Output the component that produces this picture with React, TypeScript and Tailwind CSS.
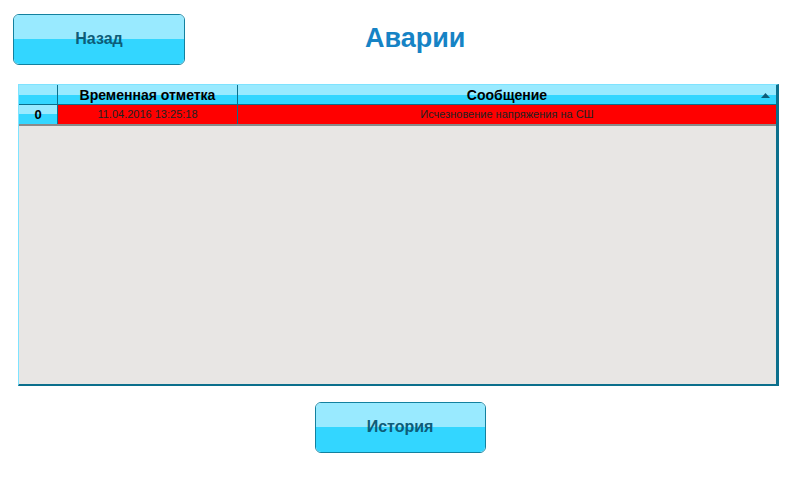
import React from "react";

function Btn({ label, className }: { label: string; className?: string }) {
  return (
    <div
      className={
        "relative flex flex-col overflow-hidden rounded-[6px] border border-[#13819f] " +
        (className ?? "")
      }
    >
      <div className="h-[24px] bg-[#99eaff]" />
      <div className="flex-1 bg-[#33d6ff]" />
      <div className="absolute inset-0 flex items-center justify-center pb-[1px] text-[16px] font-bold text-[#0d5c78]">
        {label}
      </div>
    </div>
  );
}

function HeadCell({ children, className }: { children?: React.ReactNode; className?: string }) {
  return (
    <div className={"relative flex flex-col " + (className ?? "")}>
      <div className="h-[10px] bg-[#99eaff]" />
      <div className="flex-1 bg-[#33d6ff]" />
      <div className="absolute inset-0 flex items-center justify-center text-[14px] font-bold leading-none text-black">
        {children}
      </div>
    </div>
  );
}

export default function App() {
  return (
    <div
      className="h-[480px] w-[803px] bg-white"
      style={{ fontFamily: '"Liberation Sans", Arial, sans-serif' }}
    >
      <div className="flex items-start pt-[14px]">
        <Btn label="Назад" className="ml-[13px] h-[51px] w-[172px]" />
        <div className="ml-[180px] mt-[11px] text-[27px] font-bold leading-none text-[#1683c5]">
          Аварии
        </div>
      </div>

      <div className="ml-[18px] mt-[19px] flex h-[302px] w-[761px] flex-col border-l-[1px] border-t-[1px] border-b-[2px] border-r-[3px] border-l-[#7fe3ff] border-t-[#7fe3ff] border-b-[#0b6f8c] border-r-[#0b6f8c] bg-[#e8e6e4]">
        <div className="flex h-[20px] border-b border-[#0b6f8c] bg-[#0b6f8c]">
          <HeadCell className="w-[39px] border-r border-[#0b6f8c]" />
          <HeadCell className="w-[180px] border-r border-[#0b6f8c]">Временная отметка</HeadCell>
          <HeadCell className="flex-1">
            Сообщение
            <svg className="absolute right-[6px] top-[8px]" width="9" height="5" viewBox="0 0 9 5">
              <polygon points="4.5,0 9,5 0,5" fill="#0d5c78" />
            </svg>
          </HeadCell>
        </div>
        <div className="flex h-[21px] border-b-[2px] border-[#8a8a8a]">
          <div className="relative flex w-[39px] flex-col border-r border-[#0b6f8c]">
            <div className="h-[9px] bg-[#99eaff]" />
            <div className="flex-1 bg-[#33d6ff]" />
            <div className="absolute inset-0 flex items-center justify-center text-[13px] font-bold text-black">
              0
            </div>
          </div>
          <div className="flex w-[180px] items-center justify-center border-r border-[#0b6f8c] bg-[#ff0000] text-[11px] text-[#222]">
            11.04.2016 13:25:18
          </div>
          <div className="flex flex-1 items-center justify-center bg-[#ff0000] text-[11px] text-[#222]">
            Исчезновение напряжения на СШ
          </div>
        </div>
      </div>

      <div className="flex justify-center pt-[16px]">
        <Btn label="История" className="ml-[-3px] h-[51px] w-[171px]" />
      </div>
    </div>
  );
}
